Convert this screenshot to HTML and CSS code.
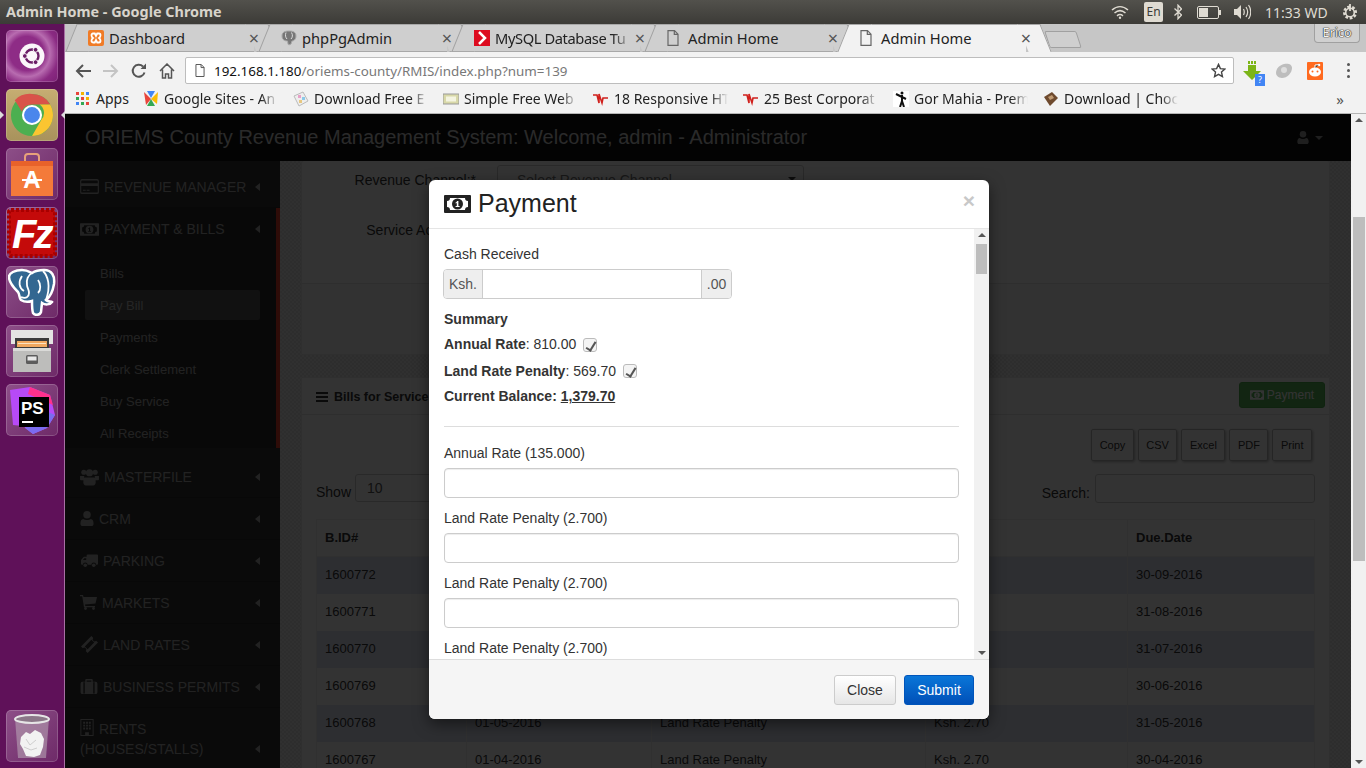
FILE: index.html
```html
<!DOCTYPE html>
<html lang="en">

<head>
  <meta charset="UTF-8">
  <title>Admin Home - Google Chrome</title>
  <link rel="stylesheet" href="styles.css">
</head>

<body>
  <svg class="icon-defs" width="0" height="0">
    <symbol id="i-money" viewBox="0 0 27 18"><path fill-rule="evenodd" d="M1 0h25a1 1 0 0 1 1 1v16a1 1 0 0 1-1 1H1a1 1 0 0 1-1-1V1a1 1 0 0 1 1-1zm5 3a3 3 0 0 1-3 3v6a3 3 0 0 1 3 3h15a3 3 0 0 1 3-3V6a3 3 0 0 1-3-3z"/><path fill-rule="evenodd" d="M13.500 3.500a5.500 5.500 0 1 1 0 11 5.500 5.500 0 0 1 0-11zM12.800 6v.9l-1.200.5v1l1.200-.4V11h-1.200v1.100h4V11h-1.200V6z"/></symbol>
    <symbol id="i-card" viewBox="0 0 20 16"><path fill-rule="evenodd" d="M2 0h16a2 2 0 0 1 2 2v12a2 2 0 0 1-2 2H2a2 2 0 0 1-2-2V2a2 2 0 0 1 2-2zm-.8 2.500v2h17.600v-2a1 1 0 0 0-1-1H2.200a1 1 0 0 0-1 1zm0 5v6a1 1 0 0 0 1 1h15.600a1 1 0 0 0 1-1v-6zM3 11.500h3v1H3zm4 0h3v1H7z"/></symbol>
    <symbol id="i-users" viewBox="0 0 20 19"><circle cx="4" cy="4.500" r="2.700"/><circle cx="16" cy="4.500" r="2.700"/><circle cx="10" cy="5" r="3.800"/><path d="M0 8.500h4.500c-.5 2 0 3.500 1 4.500H1a1 1 0 0 1-1-1zM20 8.500h-4.500c.5 2 0 3.500-1 4.500H19a1 1 0 0 0 1-1z"/><path d="M5 10h10c1 0 1.500 1.500 1.500 5 0 2-1 3.500-2.500 3.500H6C4.500 18.500 3.500 17 3.500 15c0-3.500.5-5 1.500-5z"/></symbol>
    <symbol id="i-user" viewBox="0 0 14 16"><circle cx="7" cy="4" r="4"/><path d="M3 8.500c1 .8 2.500 1.200 4 1.200s3-.4 4-1.200c2 .2 3 2 3 5 0 1.500-1 2.500-2.300 2.500H2.300C1 16 0 15 0 13.500c0-3 1-4.800 3-5z"/></symbol>
    <symbol id="i-truck" viewBox="0 0 18 14"><path fill-rule="evenodd" d="M7 0h10a1 1 0 0 1 1 1v9a1 1 0 0 1-1 1h-1a2.500 2.500 0 0 0-5 0H7a2.500 2.500 0 0 0-5 0H1a1 1 0 0 1-1-1V6l3-3.500h3V1a1 1 0 0 1 1-1zM2 6h3.500V4H3.500z"/><circle cx="4.500" cy="11.500" r="1.900"/><circle cx="13.500" cy="11.500" r="1.900"/></symbol>
    <symbol id="i-cart" viewBox="0 0 17 15"><path d="M0 0h3l.5 2H17l-1.500 6.500L5 9.500l.3 1.500H15v1.200H4L2.200 1.300H0z"/><circle cx="5.500" cy="13.500" r="1.400"/><circle cx="13.500" cy="13.500" r="1.400"/></symbol>
    <symbol id="i-ticket" viewBox="0 0 18 18"><path fill-rule="evenodd" d="M11 0l2 2a2 2 0 0 0 3 3l2 2L7 18l-2-2a2 2 0 0 0-3-3l-2-2zm0 4L4 11l3 3 7-7z"/></symbol>
    <symbol id="i-case" viewBox="0 0 18 16"><path fill-rule="evenodd" d="M6 0h6a1 1 0 0 1 1 1v2h3a2 2 0 0 1 2 2v9a2 2 0 0 1-2 2H2a2 2 0 0 1-2-2V5a2 2 0 0 1 2-2h3V1a1 1 0 0 1 1-1zm.5 1.500V3h5V1.500zM3 3.500v12h1.500v-12zm10.500 0v12H15v-12z"/></symbol>
    <symbol id="i-building" viewBox="0 0 14 18"><path fill-rule="evenodd" d="M0 0h14v18H0zm1 1v16h4v-3h4v3h4V1zM3 3h2v2H3zm3 0h2v2H6zm3 0h2v2H9zM3 6h2v2H3zm3 0h2v2H6zm3 0h2v2H9zM3 9h2v2H3zm3 0h2v2H6zm3 0h2v2H9z"/></symbol>
    <symbol id="i-file" viewBox="0 0 12 16"><path fill="none" stroke="currentColor" stroke-width="1.200" d="M1 .6h6.500L11 4.200v11.200H1zM7.300.8v3.600H11"/></symbol>
  </svg>

  <div class="topbar">
    <div class="topbar-title">Admin Home - Google Chrome</div>
    <div class="indicators">
      <svg class="ind-wifi" width="18" height="14" viewBox="0 0 18 14"><path fill="none" stroke="#dfdbd2" stroke-width="1.500" d="M1 5c5-4.500 11-4.500 16 0M3.500 8c3.500-3 7.500-3 11 0M6 10.800c2-1.600 4-1.600 6 0"/><circle cx="9" cy="12.700" r="1.200" fill="#dfdbd2"/></svg>
      <span class="ind-lang">En</span>
      <svg class="ind-bt" width="8" height="16" viewBox="0 0 8 16"><path fill="none" stroke="#dfdbd2" stroke-width="1.300" d="M.5 4.500l7 6.500L4 14.800V1.200L7.500 5 .5 11.500"/></svg>
      <svg class="ind-batt" width="24" height="13" viewBox="0 0 24 13"><rect x=".5" y=".5" width="21" height="12" rx="1.500" fill="none" stroke="#dfdbd2"/><rect x="2" y="2" width="9" height="9" fill="#dfdbd2"/><rect x="22" y="4" width="2" height="5" fill="#dfdbd2"/></svg>
      <svg class="ind-vol" width="17" height="16" viewBox="0 0 17 16"><path fill="#dfdbd2" d="M0 5h3l4-4v14l-4-4H0z"/><path fill="none" stroke="#dfdbd2" stroke-width="1.200" d="M9.500 5c1 2 1 4 0 6M12 3c2 3 2 7 0 10M14.500 1c3 4 3 10 0 14"/></svg>
      <span class="ind-clock">11:33 WD</span>
      <svg class="ind-gear" width="16" height="18" viewBox="0 0 16 18"><path fill="none" stroke="#dfdbd2" stroke-width="3" stroke-dasharray="2.600 1.600" d="M8 4a5.500 5.500 0 1 0 .01 0"/><circle cx="8" cy="9.500" r="4.300" fill="none" stroke="#dfdbd2" stroke-width="1.600"/><path stroke="#dfdbd2" stroke-width="1.800" d="M8 1v7"/></svg>
    </div>
  </div>

  <div class="desktop">
    <nav class="launcher">
      <div class="launcher-apps">
        <div class="tile tile-dash">
          <svg width="26" height="26" viewBox="0 0 26 26"><circle cx="13" cy="13" r="12.500" fill="#fbf6fa"/><circle cx="13" cy="13" r="6.500" fill="none" stroke="#6b1d66" stroke-width="2.400"/><circle cx="5.800" cy="13" r="2.400" fill="#6b1d66" stroke="#fbf6fa"/><circle cx="16.600" cy="6.800" r="2.400" fill="#6b1d66" stroke="#fbf6fa"/><circle cx="16.600" cy="19.200" r="2.400" fill="#6b1d66" stroke="#fbf6fa"/></svg>
        </div>
        <div class="tile tile-active">
          <svg width="44" height="44" viewBox="0 0 46 46"><circle cx="23" cy="23" r="22" fill="#4caf50"/><path fill="#d9534a" d="M23 1a22 22 0 0 1 19 11H23a11 11 0 0 0-10.500 7.500L5 7.500A22 22 0 0 1 23 1z"/><path fill="#fbc531" d="M42 12a22 22 0 0 1-19 33l9.500-16.500A11 11 0 0 0 31 12z"/><circle cx="23" cy="23" r="10.500" fill="#fff"/><circle cx="23" cy="23" r="8.300" fill="#4a86ec"/></svg>
        </div>
        <div class="tile">
          <svg width="42" height="44" viewBox="0 0 42 44"><path fill="none" stroke="#e8a27a" stroke-width="2" d="M14 12V5a3 3 0 0 1 3-3h8a3 3 0 0 1 3 3v7"/><path fill="#f47a3a" d="M0 9h42v35H0z"/><path fill="#e8622a" d="M0 9h42v5H0z"/><text x="21" y="36" class="app-text">A</text><path fill="#fff" d="M11 27h20v2H11z"/></svg>
        </div>
        <div class="tile tile-fz">
          <svg width="50" height="50" viewBox="0 0 50 50"><rect x="2" y="2" width="46" height="46" rx="2" fill="#c40a0a" stroke="#a80000" stroke-width="4" stroke-dasharray="3 2"/><text x="5" y="40" class="fz-text">Fz</text></svg>
        </div>
        <div class="tile">
          <svg width="48" height="48" viewBox="0 0 48 48"><path fill="#336791" stroke="#fff" stroke-width="2.500" d="M14 2c5 0 8 2 10 3 3-2 7-3 12-3 8 0 11 6 10 14-1 6-4 13-8 16 2 2 5 1 6 2-2 3-7 3-10 1l-1 9c-1 3-6 4-8 1-1-3-1-7-1-12-3 1-8 1-11-1-2-2-1-5-3-8C5 19 1 14 1 9c0-4 6-7 13-7z"/><path fill="none" stroke="#fff" stroke-width="1.800" d="M14 8c-4 6-3 12 2 15M24 5c-4 2-6 7-5 12 0 3 2 4 2 8 0 4-3 6-8 4M30 12c3 4 3 10 0 13M35 3c5 5 8 15 3 29"/></svg>
        </div>
        <div class="tile">
          <svg width="42" height="42" viewBox="0 0 42 42"><path fill="#e4e4e2" d="M0 0h42v14H0z"/><path fill="#3b3b3b" d="M4 8h34v14H4z"/><path fill="#f0a860" d="M6 11h30v6H6z"/><path fill="#fbe3c2" d="M7 13h28v1H7z"/><path fill="#bdbdbb" d="M2 18h38v24H2z"/><path fill="#dadad8" d="M2 18h38v3H2z"/><rect x="15" y="25" width="12" height="9" rx="1.500" fill="#5c5c5c"/><rect x="16.500" y="26.500" width="9" height="4" fill="#e8e8e8"/></svg>
        </div>
        <div class="tile">
          <svg width="48" height="48" viewBox="0 0 48 48"><path fill="#b74af7" d="M2 4l20-3 20 8 5 20-8 13-14 6-10-8-10-1z"/><path fill="#ff318c" d="M22 1l20 8 3 10L20 8z"/><path fill="#7b6cf0" d="M40 26l7 3-8 13-14 6-8-6z"/><rect x="11" y="11" width="30" height="30" fill="#000"/><text x="13" y="28" class="ps-text">PS</text><rect x="14" y="35" width="11" height="2" fill="#fff"/></svg>
        </div>
      </div>
      <div class="tile tile-trash">
        <svg width="38" height="46" viewBox="0 0 38 46"><path fill="#b7a3b4" opacity=".6" d="M2 5h34l-3 40H5z"/><path fill="#f2f2f2" d="M8 24l5-5 4 2 5-4 6 3 3 6-1 8-3 8-6 2-8-1-3-7-3-5z"/><path fill="none" stroke="#cfcfcf" d="M13 26l4 6 6-5M11 34l7 3 6-2"/><ellipse cx="19" cy="6" rx="17" ry="4" fill="#8b7788" stroke="#e6e6e6" stroke-width="2"/></svg>
      </div>
    </nav>

    <div class="browser">
      <div class="tabstrip">
        <div class="tab">
          <svg class="fav" viewBox="0 0 16 16"><rect width="16" height="16" rx="2" fill="#f07b26"/><path fill="none" stroke="#fff" stroke-width="1.800" d="M5 3.500h1.800L8 6l1.200-2.500H11c2 0 2 3 0 4.500 2 1.500 2 4.500 0 4.500H9.200L8 10l-1.200 2.500H5C3 12.500 3 9.500 5 8 3 6.500 3 3.500 5 3.500z"/></svg>
          <span class="tab-label">Dashboard</span><span class="tab-x">×</span>
        </div>
        <div class="tab">
          <svg class="fav" viewBox="0 0 16 16"><path fill="#777" stroke="#aaa" d="M8 1c4 0 7 1 7 5s-3 5-4 5l-1 3c-1 1-3 1-3 0l-.5-3C4 11 1 10 1 6s3-5 7-5z"/><path fill="none" stroke="#ddd" d="M5 2.500C4 5 4.500 7.500 6 9M10.500 2.500C12 5 11.500 7.500 10 9"/></svg>
          <span class="tab-label">phpPgAdmin</span><span class="tab-x">×</span>
        </div>
        <div class="tab">
          <svg class="fav" viewBox="0 0 16 16"><rect width="16" height="16" fill="#dd0b1f"/><path fill="none" stroke="#fff" stroke-width="2.500" d="M5 2l6 6-6 6"/></svg>
          <span class="tab-label tab-fade">MySQL Database Tu</span><span class="tab-x">×</span>
        </div>
        <div class="tab"><svg class="fav fav-file"><use href="#i-file"/></svg><span class="tab-label">Admin Home</span><span class="tab-x">×</span></div>
        <div class="tab tab-active"><svg class="fav fav-file"><use href="#i-file"/></svg><span class="tab-label">Admin Home</span><span class="tab-x">×</span></div>
        <div class="newtab"></div>
        <div class="profile">Erico</div>
      </div>

      <div class="toolbar">
        <svg class="tool" width="16" height="14" viewBox="0 0 16 14"><path fill="none" stroke="#555" stroke-width="2" d="M16 7H2M8 1L2 7l6 6"/></svg>
        <svg class="tool" width="16" height="14" viewBox="0 0 16 14"><path fill="none" stroke="#c4c4c4" stroke-width="2" d="M0 7h14M8 1l6 6-6 6"/></svg>
        <svg class="tool" width="16" height="16" viewBox="0 0 16 16"><path fill="none" stroke="#555" stroke-width="2" d="M13.500 9.500A6 6 0 1 1 12 3.500"/><path fill="#555" d="M9.500 6H15V.5z"/></svg>
        <svg class="tool tool-home" width="16" height="16" viewBox="0 0 16 16"><path fill="none" stroke="#555" stroke-width="1.500" d="M1 8l7-7 7 7M3.500 6.500V15h3v-4h3v4h3V6.500"/></svg>
        <div class="omnibox">
          <svg class="omni-file"><use href="#i-file"/></svg>
          <span class="url-host">192.168.1.180</span><span class="url-path">/oriems-county/RMIS/index.php?num=139</span>
          <svg class="omni-star" width="15" height="15" viewBox="0 0 16 16"><path fill="none" stroke="#444" stroke-width="1.500" d="M8 1.500l2 4.500 4.800.5-3.600 3.200 1 4.800L8 12.100l-4.200 2.400 1-4.800L1.200 6.500 6 6z"/></svg>
        </div>
        <div class="extensions">
          <div class="ext ext-dl">
            <svg width="18" height="20" viewBox="0 0 18 20"><path fill="#7cb518" d="M5 0h2v3H5zM8 0h2v3H8zM11 0h2v3h-2zM5 4h8v6h5l-9 9-9-9h5z"/></svg>
            <span class="ext-badge">?</span>
          </div>
          <svg class="ext" width="18" height="16" viewBox="0 0 18 16"><path fill="#bdbdbd" d="M9 1c4-1 8 0 8 4 0 5-5 10-10 10-4 0-6-3-6-5 0-5 4-8 8-9z"/><circle cx="9" cy="7" r="3" fill="#dedede"/></svg>
          <svg class="ext" width="16" height="18" viewBox="0 0 16 18"><rect width="16" height="18" rx="1" fill="#ff6a1f"/><ellipse cx="8" cy="10" rx="6" ry="4.500" fill="#fff"/><circle cx="5.500" cy="9.500" r="1" fill="#ff6a1f"/><circle cx="10.500" cy="9.500" r="1" fill="#ff6a1f"/><circle cx="12" cy="3" r="1.300" fill="#fff"/><path stroke="#fff" d="M8 6V3l4-.3"/></svg>
          <div class="menu-dots"><i></i><i></i><i></i></div>
        </div>
      </div>

      <div class="bookmarks">
        <div class="bm-apps">
          <span class="apps-grid"><i class="r"></i><i class="y"></i><i class="b"></i><i class="g"></i><i class="r"></i><i class="y"></i><i class="b"></i><i class="g"></i><i class="r"></i></span>
          Apps
        </div>
        <div class="bm">
          <svg class="bm-icon" viewBox="0 0 16 16"><path fill="#e8453c" d="M1 1l7 7-5 6z"/><path fill="#fbbc05" d="M15 1L8 8l6 5z"/><path fill="#34a853" d="M8 8l-4 7h8z"/><path fill="#4285f4" d="M4 0h8L8 7z"/></svg>
          <span class="bm-label">Google Sites - An</span>
        </div>
        <div class="bm">
          <svg class="bm-icon" viewBox="0 0 16 16"><path fill="#eee" stroke="#bbb" d="M1 5l9-4 5 9-9 5z"/><rect x="5" y="4" width="3" height="3" fill="#e8a0c8"/><rect x="9" y="6" width="3" height="3" fill="#8cc8e8"/><rect x="6" y="9" width="3" height="3" fill="#e8c880"/></svg>
          <span class="bm-label">Download Free E</span>
        </div>
        <div class="bm">
          <svg class="bm-icon" viewBox="0 0 16 16"><rect y="3" width="16" height="10" fill="#d8d8a8" stroke="#999"/><rect x="3" y="5.500" width="10" height="5" fill="#f4f4e0"/></svg>
          <span class="bm-label">Simple Free Web</span>
        </div>
        <div class="bm">
          <svg class="bm-icon" viewBox="0 0 16 16"><path fill="none" stroke="#d0201c" stroke-width="1.600" d="M0 4h4l2 8V3l3 9 1-5h5"/></svg>
          <span class="bm-label">18 Responsive HT</span>
        </div>
        <div class="bm">
          <svg class="bm-icon" viewBox="0 0 16 16"><path fill="none" stroke="#d0201c" stroke-width="1.600" d="M0 4h4l2 8V3l3 9 1-5h5"/></svg>
          <span class="bm-label">25 Best Corporat</span>
        </div>
        <div class="bm">
          <svg class="bm-icon" viewBox="0 0 16 16"><rect width="16" height="16" fill="#fff"/><circle cx="9" cy="2" r="1.500" fill="#111"/><path stroke="#111" stroke-width="2" fill="none" d="M9 4v6l-2 6M9 10l2 6M3 3l6 3 4 2"/></svg>
          <span class="bm-label">Gor Mahia - Prem</span>
        </div>
        <div class="bm">
          <svg class="bm-icon" viewBox="0 0 16 16"><path fill="#6e4a2e" d="M1 6l8-5 6 6-8 8z"/><path fill="#c09a72" d="M5 6l4-2 2 3-4 2z"/></svg>
          <span class="bm-label">Download | Choc</span>
        </div>
        <div class="bm-more">»</div>
      </div>

      <div class="viewport">
        <div class="site">
          <header class="navbar">
            <div class="brand">ORIEMS County Revenue Management System: Welcome, admin - Administrator</div>
            <div class="nav-user"><svg class="nav-user-icon"><use href="#i-user"/></svg><span class="caret-down"></span></div>
          </header>

          <div class="site-main">
            <aside class="sidebar">
              <div class="side-item"><svg class="si si-card"><use href="#i-card"/></svg><span class="side-label">REVENUE MANAGER</span><span class="caret-left"></span></div>
              <div class="side-group">
                <div class="side-item"><svg class="si si-money"><use href="#i-money"/></svg><span class="side-label">PAYMENT &amp; BILLS</span><span class="caret-left"></span></div>
                <ul class="submenu">
                  <li>Bills</li>
                  <li class="current">Pay Bill</li>
                  <li>Payments</li>
                  <li>Clerk Settlement</li>
                  <li>Buy Service</li>
                  <li>All Receipts</li>
                </ul>
              </div>
              <div class="side-item"><svg class="si si-users"><use href="#i-users"/></svg><span class="side-label">MASTERFILE</span><span class="caret-left"></span></div>
              <div class="side-item"><svg class="si si-user"><use href="#i-user"/></svg><span class="side-label">CRM</span><span class="caret-left"></span></div>
              <div class="side-item"><svg class="si si-truck"><use href="#i-truck"/></svg><span class="side-label">PARKING</span><span class="caret-left"></span></div>
              <div class="side-item"><svg class="si si-cart"><use href="#i-cart"/></svg><span class="side-label">MARKETS</span><span class="caret-left"></span></div>
              <div class="side-item"><svg class="si si-ticket"><use href="#i-ticket"/></svg><span class="side-label">LAND RATES</span><span class="caret-left"></span></div>
              <div class="side-item"><svg class="si si-case"><use href="#i-case"/></svg><span class="side-label">BUSINESS PERMITS</span><span class="caret-left"></span></div>
              <div class="side-item side-item-wrap">
                <div class="side-wrap-text"><svg class="si si-building"><use href="#i-building"/></svg><span class="side-label">RENTS</span><br>(HOUSES/STALLS)</div>
                <span class="caret-left"></span>
              </div>
            </aside>

            <main class="content">
              <section class="panel panel-form">
                <div class="form-row form-row-channel">
                  <label>Revenue Channel:*</label>
                  <div class="fake-select">Select Revenue Channel<span class="select-arrow"></span></div>
                </div>
                <div class="form-row form-row-account"><label>Service Account:*</label></div>
                <div class="form-foot"></div>
              </section>

              <section class="panel panel-bills">
                <div class="panel-head">
                  <div class="panel-title">
                    <span class="bars"><i></i><i></i><i></i></span>
                    Bills for Service
                  </div>
                  <div class="btn-pay"><svg class="pay-icon"><use href="#i-money"/></svg>Payment</div>
                </div>
                <div class="panel-body">
                  <div class="export-row">
                    <span class="btn-dt">Copy</span><span class="btn-dt">CSV</span><span class="btn-dt">Excel</span><span class="btn-dt">PDF</span><span class="btn-dt">Print</span>
                  </div>
                  <div class="dt-controls">
                    <div class="dt-show">Show <span class="dt-select">10</span></div>
                    <div class="dt-search">Search: <span class="dt-input"></span></div>
                  </div>
                  <table class="bills">
                    <thead>
                      <tr><th>B.ID#</th><th></th><th></th><th class="th-balance">Balance</th><th>Due.Date</th></tr>
                    </thead>
                    <tbody>
                      <tr><td>1600772</td><td></td><td></td><td></td><td>30-09-2016</td></tr>
                      <tr><td>1600771</td><td></td><td></td><td></td><td>31-08-2016</td></tr>
                      <tr><td>1600770</td><td></td><td></td><td></td><td>31-07-2016</td></tr>
                      <tr><td>1600769</td><td></td><td></td><td></td><td>30-06-2016</td></tr>
                      <tr><td>1600768</td><td>01-05-2016</td><td>Land Rate Penalty</td><td>Ksh. 2.70</td><td>31-05-2016</td></tr>
                      <tr><td>1600767</td><td>01-04-2016</td><td>Land Rate Penalty</td><td>Ksh. 2.70</td><td>30-04-2016</td></tr>
                    </tbody>
                  </table>
                </div>
              </section>
            </main>
          </div>

          <div class="backdrop"></div>

          <div class="modal">
            <div class="modal-head">
              <svg class="modal-icon"><use href="#i-money"/></svg>
              <h4>Payment</h4>
              <span class="modal-x">×</span>
            </div>
            <div class="modal-middle">
              <div class="modal-body">
                <div class="field-label">Cash Received</div>
                <div class="input-group">
                  <span class="addon">Ksh.</span><input type="text"><span class="addon addon-r">.00</span>
                </div>
                <div class="summary">
                  <div class="sum-title"><b>Summary</b></div>
                  <div class="sum-line"><b>Annual Rate</b>: 810.00 <span class="check"></span></div>
                  <div class="sum-line"><b>Land Rate Penalty</b>: 569.70 <span class="check"></span></div>
                  <div class="sum-balance"><b>Current Balance: <u>1,379.70</u></b></div>
                </div>
                <hr>
                <div class="rate-field"><div class="field-label">Annual Rate (135.000)</div><input type="text"></div>
                <div class="rate-field"><div class="field-label">Land Rate Penalty (2.700)</div><input type="text"></div>
                <div class="rate-field"><div class="field-label">Land Rate Penalty (2.700)</div><input type="text"></div>
                <div class="rate-field"><div class="field-label">Land Rate Penalty (2.700)</div></div>
              </div>
              <div class="bar bar-modal"><span class="arrow-up"></span><span class="bar-thumb"></span><span class="arrow-down"></span></div>
            </div>
            <div class="modal-foot">
              <span class="btn btn-close">Close</span>
              <span class="btn btn-submit">Submit</span>
            </div>
          </div>
        </div>
        <div class="bar bar-page"><span class="arrow-up"></span><span class="bar-thumb"></span><span class="arrow-down"></span></div>
      </div>
    </div>
  </div>
</body>

</html>
```

FILE: styles.css
```css
* {
  margin: 0;
  padding: 0;
  box-sizing: border-box;
}

html,
body {
  width: 1366px;
  height: 768px;
  overflow: hidden;
}

body {
  font-family: "Liberation Sans", Arial, sans-serif;
  font-size: 14px;
  color: #333;
  display: flex;
  flex-direction: column;
  background: #000;
}

.icon-defs {
  position: absolute;
}

svg {
  display: block;
  fill: currentColor;
}

/* desktop panel */
.topbar {
  height: 24px;
  flex: none;
  background: linear-gradient(#52514c, #3c3b37);
  display: flex;
  justify-content: space-between;
  align-items: center;
  color: #dfdbd2;
  font-family: "Noto Sans", sans-serif;
}

.topbar-title {
  padding: 0 0 2px 6px;
  font-size: 14.400px;
  font-weight: 700;
  color: #d8d4cb;
}

.indicators {
  display: flex;
  align-items: center;
  height: 24px;
  padding-right: 8px;
}

.ind-wifi { margin-right: 15px; }

.ind-lang {
  width: 19px;
  height: 20px;
  background: #dfdbd2;
  color: #3c3b37;
  font-size: 12px;
  line-height: 20px;
  text-align: center;
  border-radius: 2px;
  margin-right: 11px;
}

.ind-bt { margin-right: 15px; }
.ind-batt { margin-right: 13px; }
.ind-vol { margin-right: 14px; }

.ind-clock {
  font-size: 14px;
  margin-right: 14px;
  width: 63px;
  white-space: nowrap;
}

.desktop {
  flex: 1;
  display: flex;
  min-height: 0;
}

/* launcher */
.launcher {
  width: 65px;
  flex: none;
  background: #5f1159;
  border-right: 1px solid #a86fa4;
  padding: 6px 6px 6px;
  display: flex;
  flex-direction: column;
  justify-content: space-between;
}

.launcher-apps {
  display: flex;
  flex-direction: column;
  gap: 7px;
}

.tile {
  width: 52px;
  height: 52px;
  border-radius: 5px;
  background: linear-gradient(135deg, #8d4f88, #6e2a68);
  box-shadow: inset 0 0 0 1px rgba(255, 255, 255, .18);
  display: flex;
  align-items: center;
  justify-content: center;
}

.tile-dash {
  background: radial-gradient(circle at 40% 45%, #8e2c86 0 40%, #b86cb0 55%, #8a2a82 75%, #7a1f74);
}

.tile-active {
  background: linear-gradient(#c6ad72, #a8925c);
  position: relative;
}

/* running app markers */
.tile-active::before,
.tile-active::after {
  content: "";
  position: absolute;
  top: 22px;
  border: 4px solid transparent;
}

.tile-active::before {
  left: -6px;
  border-left: 4px solid #dcdcdc;
  border-right: 0;
}

.tile-active::after {
  right: -7px;
  border-right: 4px solid #dcdcdc;
  border-left: 0;
}

.ps-text {
  font-family: "Liberation Sans", sans-serif;
  font-size: 17px;
  font-weight: 700;
  fill: #fff;
}

.app-text {
  font-family: "Liberation Sans", sans-serif;
  font-size: 24px;
  font-weight: 700;
  text-anchor: middle;
  fill: #fff;
}

.fz-text {
  font-family: "Liberation Sans", sans-serif;
  font-size: 40px;
  font-weight: 700;
  font-style: italic;
  letter-spacing: -3px;
  fill: #fff;
}

/* browser chrome */
.browser {
  flex: 1;
  min-width: 0;
  display: flex;
  flex-direction: column;
  font-family: "Noto Sans", sans-serif;
}

.tabstrip {
  height: 28px;
  flex: none;
  background: #c6c6c6;
  display: flex;
  padding-left: 6px;
  position: relative;
}

.tab {
  width: 193px;
  height: 28px;
  display: flex;
  align-items: center;
  padding: 0 3px 0 17px;
  position: relative;
  font-size: 14.700px;
  color: #222;
  z-index: 1;
  background: linear-gradient(#a8a8a8 1px, #cfcfcf 1px, #cfcfcf 27px, #a8a8a8 27px);
  background-size: calc(100% - 20px) 100%;
  background-position: center;
  background-repeat: no-repeat;
}

.tab::before,
.tab::after {
  content: "";
  position: absolute;
  top: 0;
  bottom: 0;
  width: 22px;
  background: #cfcfcf;
  border-top: 1px solid #a8a8a8;
  border-bottom: 1px solid #a8a8a8;
  z-index: -1;
}

.tab::before {
  left: 0;
  border-left: 1px solid #a0a0a0;
  transform: skewX(-22deg);
}

.tab::after {
  right: -10px;
  border-right: 1px solid #a0a0a0;
  transform: skewX(22deg);
}

.tab-active {
  z-index: 2;
  background: linear-gradient(#a8a8a8 1px, #f2f2f2 1px);
  background-size: calc(100% - 20px) 100%;
  background-position: center;
  background-repeat: no-repeat;
}

.tab-active::before,
.tab-active::after {
  background: #f2f2f2;
  border-bottom: 0;
}

.fav {
  width: 16px;
  height: 16px;
  flex: none;
  margin-right: 5px;
}

.fav-file {
  width: 12px;
  color: #666;
  margin: 0 9px 0 0;
}

.tab-label {
  flex: 1;
  min-width: 0;
  white-space: nowrap;
}

.tab-fade {
  letter-spacing: -.4px;
  -webkit-mask-image: linear-gradient(90deg, #000 85%, transparent);
  mask-image: linear-gradient(90deg, #000 85%, transparent);
}

.tab-x {
  width: 14px;
  font-size: 18px;
  line-height: 18px;
  color: #555;
  text-align: center;
  flex: none;
}

.newtab {
  width: 32px;
  height: 17px;
  margin: 7px 0 0 11px;
  background: #cfcfcf;
  border: 1px solid #a0a0a0;
  border-radius: 2px;
  transform: skewX(18deg);
}

.profile {
  margin: 0 6px 0 auto;
  width: 46px;
  height: 19px;
  border: 1px solid #a0a0a0;
  border-top: 0;
  border-radius: 0 0 4px 4px;
  background: #d0d0d0;
  color: #f2f2f2;
  font-size: 12.500px;
  line-height: 18px;
  text-align: center;
  text-shadow: 0 0 1px #222, 0 0 1px #222, 0 0 1px #222;
}

.toolbar {
  height: 35px;
  flex: none;
  background: #f2f2f2;
  display: flex;
  align-items: center;
  padding: 2px 0 0 10px;
}

.tool {
  margin-right: 12px;
  flex: none;
}

.tool-home {
  margin-right: 10px;
}

.omnibox {
  width: 1049px;
  height: 27px;
  background: #fff;
  border: 1px solid #bdbdbd;
  border-radius: 2px;
  display: flex;
  align-items: center;
  padding-left: 9px;
  font-size: 13.400px;
  flex: none;
}

.omni-file {
  width: 10px;
  height: 13px;
  color: #555;
  margin-right: 9px;
}

.url-host {
  color: #111;
}

.url-path {
  color: #787878;
}

.omni-star {
  margin-left: auto;
  margin-right: 7px;
}

.extensions {
  flex: 1;
  display: flex;
  align-items: center;
  padding-left: 9px;
}

.ext {
  margin-right: 14px;
  flex: none;
}

.ext-dl {
  position: relative;
  width: 18px;
  height: 20px;
}

.ext-badge {
  position: absolute;
  right: -4px;
  bottom: -5px;
  width: 10px;
  height: 12px;
  background: #4285f4;
  color: #fff;
  font-size: 9px;
  line-height: 12px;
  text-align: center;
}

.menu-dots {
  display: flex;
  flex-direction: column;
  gap: 3px;
  margin-left: 10px;
}

.menu-dots i {
  width: 3px;
  height: 3px;
  border-radius: 50%;
  background: #555;
}

.bookmarks {
  height: 27px;
  flex: none;
  background: #f2f2f2;
  border-bottom: 1px solid #b5b5b5;
  display: flex;
  align-items: center;
  padding: 0 0 3px 11px;
  font-size: 14px;
  color: #222;
}

.bm-apps {
  width: 67px;
  flex: none;
  display: flex;
  align-items: center;
  gap: 6px;
}

.apps-grid {
  width: 14px;
  display: grid;
  grid-template-columns: repeat(3, 3px);
  gap: 2px;
}

.apps-grid i {
  height: 3px;
}

.apps-grid .r { background: #e8453c; }
.apps-grid .y { background: #f4b400; }
.apps-grid .b { background: #4285f4; }
.apps-grid .g { background: #34a853; }

.bm {
  width: 150px;
  flex: none;
  display: flex;
  align-items: center;
  gap: 5px;
  padding-right: 15px;
}

.bm-icon {
  width: 16px;
  height: 16px;
  flex: none;
}

.bm-label {
  flex: 1;
  min-width: 0;
  white-space: nowrap;
  -webkit-mask-image: linear-gradient(90deg, #000 85%, transparent);
  mask-image: linear-gradient(90deg, #000 85%, transparent);
}

.bm-more {
  margin-left: auto;
  margin-right: 22px;
  font-size: 15px;
  color: #555;
}

/* the page */
.viewport {
  flex: 1;
  min-height: 0;
  display: flex;
}

.site {
  flex: 1;
  min-width: 0;
  position: relative;
  overflow: hidden;
  display: flex;
  flex-direction: column;
  font-family: "Liberation Sans", Arial, sans-serif;
}

.navbar {
  height: 47px;
  flex: none;
  background: #111;
  display: flex;
  align-items: center;
  justify-content: space-between;
  padding: 0 28px 0 20px;
}

.brand {
  font-size: 20px;
  color: #d0d0d0;
}

.nav-user {
  display: flex;
  align-items: center;
  gap: 6px;
}

.nav-user-icon {
  width: 12px;
  height: 13px;
  color: #9d9d9d;
}

.caret-down {
  border: 4px solid transparent;
  border-top-color: #9d9d9d;
  border-bottom: 0;
}

.site-main {
  flex: 1;
  min-height: 0;
  display: flex;
}

.sidebar {
  width: 215px;
  flex: none;
  background: #333;
  padding-top: 5px;
  color: #aaa;
}

.side-item {
  height: 42px;
  display: flex;
  align-items: center;
  padding: 0 20px 0 15px;
  font-size: 14px;
  border-bottom: 1px solid #2b2b2b;
}

.si {
  flex: none;
  margin-right: 5px;
}

.si-card { width: 19px; height: 15px; }
.si-money { width: 19px; height: 13px; }
.si-users { width: 19px; height: 18px; }
.si-user { width: 14px; height: 15px; }
.si-truck { width: 17px; height: 14px; margin-left: 1px; }
.si-cart { width: 17px; height: 15px; }
.si-ticket { width: 17px; height: 17px; margin-left: 1px; }
.si-case { width: 18px; height: 15px; }
.si-building { width: 14px; height: 17px; display: inline-block; vertical-align: -2px; }

.side-label {
  flex: 1;
  white-space: nowrap;
}

.caret-left {
  flex: none;
  border: 4px solid transparent;
  border-right: 5px solid #aaa;
  border-left: 0;
}

.side-item-wrap {
  height: 62px;
  align-items: flex-end;
  padding-bottom: 10px;
}

.side-item-wrap .caret-left {
  margin-bottom: 6px;
}

.side-wrap-text {
  flex: 1;
  line-height: 20px;
}

.side-group {
  border-right: 4px solid #e73d2a;
  margin-bottom: 8px;
  background: #2c2c2c;
}

.side-group .side-item {
  padding-right: 16px;
  border-bottom: 0;
}

.submenu {
  list-style: none;
  padding: 8px 16px 0 20px;
  height: 198px;
  font-size: 13px;
}

.submenu li {
  height: 30px;
  margin-bottom: 2px;
  line-height: 32px;
  padding-left: 15px;
  border-radius: 2px;
}

.submenu .current {
  background: #555;
  color: #bbb;
}

.content {
  flex: 1;
  min-width: 0;
  padding: 0 21px;
  background-color: #e6e6e6;
  background-image: repeating-conic-gradient(#dedede 0 25%, #eeeeee 0 50%);
  background-size: 4px 4px;
  overflow: hidden;
}

.panel {
  background: #fff;
  border: 1px solid #eaeaea;
  border-radius: 3px;
}

.panel-form {
  height: 194px;
  border-top: 0;
  display: flex;
  flex-direction: column;
  margin-bottom: 22px;
  font-size: 14px;
}

.form-row {
  display: flex;
  align-items: flex-start;
  color: #333;
}

.form-row-channel {
  height: 60px;
  padding-top: 4px;
}

.form-row label {
  width: 174px;
  text-align: right;
  padding-top: 7px;
}

.fake-select {
  margin-left: 21px;
  width: 307px;
  height: 28px;
  border: 1px solid #ccc;
  border-radius: 3px;
  padding: 6px 19px;
  color: #777;
  position: relative;
}

.select-arrow {
  position: absolute;
  right: 7px;
  top: 11px;
  border: 4px solid transparent;
  border-top-color: #444;
  border-bottom: 0;
}

.form-row-account {
  height: 60px;
}

.form-row-account label {
  padding-top: 1px;
}

.form-foot {
  margin-top: auto;
  height: 71px;
  background: #f9f9f9;
  border-top: 1px solid #e6e6e6;
}

.panel-bills {
  padding-bottom: 20px;
}

.panel-head {
  height: 37px;
  display: flex;
  align-items: center;
  justify-content: space-between;
  padding: 0 4px 0 14px;
  background: #fcfcfc;
  border-bottom: 1px solid #e6e6e6;
}

.panel-title {
  display: flex;
  align-items: center;
  gap: 6px;
  padding-top: 1px;
  font-size: 12.500px;
  font-weight: 700;
  color: #333;
  white-space: nowrap;
}

.bars {
  display: flex;
  flex-direction: column;
  gap: 2px;
  width: 12px;
}

.bars i {
  height: 2px;
  background: #333;
}

.btn-pay {
  width: 86px;
  height: 26px;
  margin-bottom: 3px;
  background: #5cb85c;
  border: 1px solid #4cae4c;
  border-radius: 3px;
  color: #fff;
  font-size: 12px;
  display: flex;
  align-items: center;
  justify-content: center;
  gap: 3px;
}

.pay-icon {
  width: 14px;
  height: 10px;
}

.panel-body {
  padding: 14px 14px 0;
}

.export-row {
  display: flex;
  justify-content: flex-end;
  gap: 4px;
  padding-right: 3px;
  height: 33px;
}

.btn-dt {
  height: 32px;
  padding: 0 7.500px;
  border: 1px solid #bbb;
  border-radius: 2px;
  background: #fff;
  font-size: 11px;
  line-height: 30px;
  color: #333;
  box-shadow: 1px 1px 3px rgba(0, 0, 0, .3);
}

.dt-controls {
  display: flex;
  justify-content: space-between;
  margin-top: 12px;
  height: 45px;
}

.dt-show,
.dt-search {
  display: flex;
  align-items: flex-start;
  gap: 4px;
  line-height: 36px;
  font-size: 14px;
}

.dt-search {
  gap: 5px;
  line-height: 38px;
}

.dt-select {
  display: block;
  width: 200px;
  height: 28px;
  border: 1px solid #ccc;
  border-radius: 3px;
  line-height: 26px;
  padding-left: 11px;
  color: #555;
}

.dt-input {
  display: block;
  width: 220px;
  height: 29px;
  border: 1px solid #ccc;
  border-radius: 3px;
}

.bills {
  width: 999px;
  border-collapse: collapse;
  table-layout: fixed;
  font-size: 13px;
  color: #333;
}

.bills th:nth-child(1) { width: 150px; }
.bills th:nth-child(2) { width: 185px; }
.bills th:nth-child(3) { width: 274px; }
.bills th:nth-child(4) { width: 202px; }

.bills th,
.bills td {
  height: 37px;
  padding: 0 8px 2px;
  text-align: left;
  border: 1px solid #eee;
}

.bills td {
  border-width: 0 1px;
  white-space: nowrap;
}

.bills tbody tr:nth-child(odd) {
  background: #e0e6f5;
}

/* bootstrap style modal */
.backdrop {
  position: absolute;
  inset: 0;
  background: rgba(0, 0, 0, .8);
}

.modal {
  position: absolute;
  left: 364px;
  top: 66px;
  width: 560px;
  height: 539px;
  background: #fff;
  border-radius: 6px;
  overflow: hidden;
  display: flex;
  flex-direction: column;
  box-shadow: 0 5px 15px rgba(0, 0, 0, .5);
}

.modal-head {
  height: 49px;
  flex: none;
  border-bottom: 1px solid #e5e5e5;
  display: flex;
  align-items: center;
  padding: 0 15px;
}

.modal-icon {
  width: 27px;
  height: 18px;
  color: #222;
  margin-right: 7px;
}

.modal-head h4 {
  font-size: 25px;
  font-weight: 400;
  color: #222;
  margin-top: -2px;
}

.modal-x {
  margin-left: auto;
  margin-right: -1px;
  margin-top: -6px;
  font-size: 21px;
  font-weight: 700;
  color: #c8c8c8;
}

.modal-middle {
  flex: 1;
  min-height: 0;
  display: flex;
}

.modal-body {
  flex: 1;
  min-width: 0;
  overflow: hidden;
  padding: 15px 15px 0;
  line-height: 20px;
}

.field-label {
  height: 20px;
  margin-bottom: 5px;
}

.input-group {
  display: flex;
  width: 289px;
  height: 30px;
  margin: 0 0 9px -1px;
  border: 1px solid #ccc;
  border-radius: 4px;
  overflow: hidden;
}

.input-group input {
  flex: 1;
  min-width: 0;
  border: 0;
  outline: 0;
}

.addon {
  width: 39px;
  flex: none;
  background: #eee;
  border-right: 1px solid #ccc;
  text-align: center;
  line-height: 28px;
  color: #555;
}

.addon-r {
  width: 30px;
  border-right: 0;
  border-left: 1px solid #ccc;
}

.summary {
  margin-top: 10px;
}

.sum-title {
  height: 20px;
  margin-bottom: 3px;
}

.sum-line {
  height: 26px;
  display: flex;
  align-items: center;
  white-space: pre;
  padding-bottom: 2px;
}

.sum-line + .sum-line {
  padding-top: 1px;
}

.check {
  width: 14px;
  height: 14px;
  margin-left: 3px;
  margin-top: 1px;
  border: 1px solid #bbb;
  border-radius: 3px;
  background: #f4f4f4;
  position: relative;
}

.check::after {
  content: "";
  position: absolute;
  left: 4px;
  top: 1px;
  width: 4px;
  height: 9px;
  border: solid #555;
  border-width: 0 2px 2px 0;
  transform: rotate(32deg);
}

.sum-balance {
  height: 20px;
  margin-top: 2px;
}

.modal-body hr {
  border: 0;
  border-top: 1px solid #ddd;
  margin: 20px 0 16px;
}

.rate-field {
  height: 65px;
}

.rate-field input {
  display: block;
  width: 100%;
  height: 30px;
  border: 1px solid #ccc;
  border-radius: 4px;
  outline: 0;
  box-shadow: inset 0 1px 1px rgba(0, 0, 0, .075);
}

.modal-foot {
  height: 60px;
  flex: none;
  background: #f5f5f5;
  border-top: 1px solid #ddd;
  display: flex;
  justify-content: flex-end;
  align-items: center;
  gap: 8px;
  padding-right: 15px;
}

.btn {
  height: 30px;
  border-radius: 3px;
  font-size: 14px;
  line-height: 28px;
  text-align: center;
}

.btn-close {
  width: 62px;
  background: linear-gradient(#fff, #e6e6e6);
  border: 1px solid #ccc;
  color: #333;
}

.btn-submit {
  width: 70px;
  background: linear-gradient(#0a76d8, #0050b8);
  border: 1px solid #0055bb;
  color: #fff;
}

/* hand drawn scrollbars */
.bar {
  width: 15px;
  flex: none;
  background: #f1f1f1;
  display: flex;
  flex-direction: column;
  align-items: center;
  position: relative;
}

.bar-thumb {
  position: absolute;
  background: #bdbdbd;
}

.bar-modal .bar-thumb {
  top: 15px;
  left: 2px;
  width: 11px;
  height: 30px;
}

.bar-page .bar-thumb {
  top: 103px;
  left: 2px;
  width: 12px;
  height: 344px;
}

.arrow-up {
  margin-top: 4px;
  border: 4px solid transparent;
  border-bottom-color: #555;
  border-top: 0;
}

.arrow-down {
  margin-top: auto;
  margin-bottom: 4px;
  border: 4px solid transparent;
  border-top-color: #555;
  border-bottom: 0;
}
```
